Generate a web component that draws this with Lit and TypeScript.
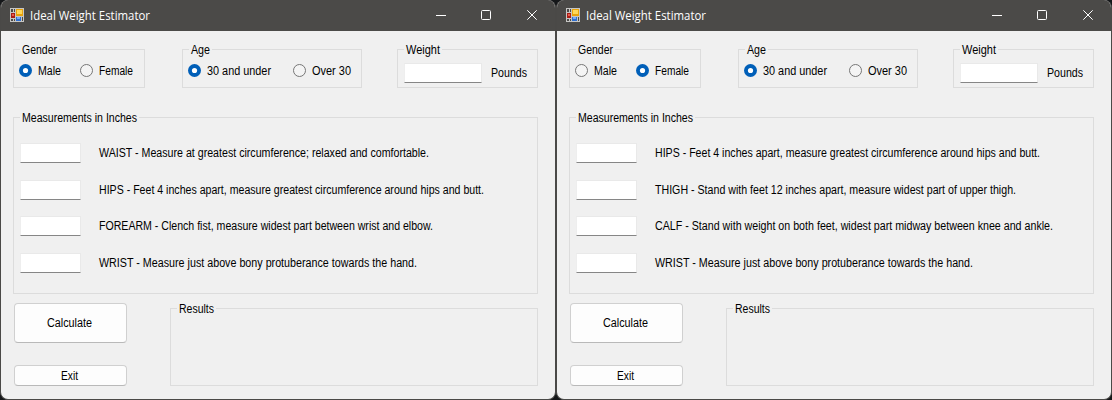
import { LitElement, html, css } from "lit";
import { customElement, property } from "lit/decorators.js";

/** A single line of text set to an exact advance width. */
@customElement("fit-text")
class FitText extends LitElement {
  @property() text = "";
  @property({ type: Number }) w = 10;
  @property({ type: Number }) size = 12;
  static styles = css`
    :host { display: block; flex: none; height: 14px; }
    svg { display: block; overflow: visible; }
    text { font-family: var(--face, "Liberation Sans", Arial, sans-serif); fill: currentColor; }
  `;
  render() {
    return html`<svg width=${this.w} height="14">
      <text x="0" y="11" font-size=${this.size} textLength=${this.w} lengthAdjust="spacingAndGlyphs">${this.text}</text>
    </svg>`;
  }
}

@customElement("group-box")
class GroupBox extends LitElement {
  @property() label = "";
  @property({ type: Number }) w = 10;
  static styles = css`
    :host { display: block; box-sizing: border-box; border: 1px solid #dcdcdc; }
    .legend { width: fit-content; margin: -7px 0 0 6px; padding: 0 2px; background: #f0f0f0; }
  `;
  render() {
    return html`<div class="legend"><fit-text .text=${this.label} .w=${this.w}></fit-text></div><slot></slot>`;
  }
}

@customElement("radio-option")
class RadioOption extends LitElement {
  @property() label = "";
  @property({ type: Number }) w = 10;
  @property({ type: Boolean }) checked = false;
  static styles = css`
    :host { display: flex; height: 14px; gap: 6px; }
    svg { display: block; flex: none; }
  `;
  render() {
    return html`<svg width="13" height="13" viewBox="0 0 13 13">
        ${this.checked
          ? html`<svg width="13" height="13"><circle cx="6.5" cy="6.5" r="6.5" fill="#005fb8" /><circle cx="6.5" cy="6.5" r="2.6" fill="#fff" /></svg>`
          : html`<svg width="13" height="13"><circle cx="6.5" cy="6.5" r="6" fill="#f4f4f4" stroke="#767676" /></svg>`}
      </svg>
      <fit-text .text=${this.label} .w=${this.w}></fit-text>`;
  }
}

interface Line { text: string; w: number; }

@customElement("estimator-window")
class EstimatorWindow extends LitElement {
  @property() gender = "Male";
  @property({ attribute: false }) lines: Line[] = [];
  static styles = css`
    :host { display: block; box-sizing: border-box; width: 556px; height: 400px; border: 1px solid #4a4947; border-top: 0; border-radius: 8px; background: #f0f0f0; overflow: hidden; color: #000; }
    .bar { display: flex; height: 31px; background: #4b4a48; color: #fff; --face: "Open Sans", "Noto Sans", sans-serif; }
    .icon { display: block; margin: 8px 6px 0 9px; }
    .title { margin-top: 9px; }
    .controls { display: block; margin-left: auto; margin-right: 17px; margin-top: 9px; }
    .content { padding: 18px 17px 0 12px; }
    .top { display: flex; }
    .gender { width: 132px; height: 39px; }
    .age { width: 180px; height: 39px; margin-left: 37px; }
    .weight { width: 141px; height: 39px; margin-left: 35px; }
    .radios { display: flex; margin: 7px 0 0 5px; }
    .gender .second { margin-left: 19px; }
    .age .second { margin-left: 22px; }
    .field { flex: none; box-sizing: border-box; width: 61px; height: 20px; background: #fff; border: 1px solid #e9e9e9; border-left-color: #eeeeee; border-bottom-color: #868686; }
    .amount { display: flex; align-items: center; gap: 9px; margin: 6px 0 0 6px; }
    .amount .field { width: 78px; }
    .measure { height: 177px; margin-top: 29px; }
    .rows { display: grid; grid-template-rows: 37px 36px 37px 20px; margin: 18px 0 0 6px; }
    .row { display: flex; align-items: center; height: 20px; gap: 18px; }
    .bottom { display: flex; margin-top: 9px; }
    .actions { display: flex; flex-direction: column; gap: 22px; margin-left: 1px; }
    button { display: flex; align-items: center; justify-content: center; box-sizing: border-box; width: 113px; height: 40px; padding: 0 2px 0 0; border: 1px solid #d0d0d0; border-bottom-color: #b9b9b9; border-radius: 4px; background: #fdfdfd; color: #000; }
    button.exit { height: 21px; }
    .results { width: 368px; height: 78px; margin: 5px 0 0 43px; }
  `;
  render() {
    return html`
      <div class="bar">
        <svg class="icon" width="14" height="14" viewBox="0 0 14 14" shape-rendering="crispEdges">
          <rect width="14" height="14" fill="#c6c6c4" />
          <path d="M1 1h4v3H1zM1 11h4v2H1zM12 9h1v4h-1z" fill="#4b4a48" />
          <path d="M3 1h1v3H3zM3 11h1v2H3z" fill="#c6c6c4" />
          <path d="M1 5h4v5H1z" fill="#a91d16" /><path d="M2 6h2v2H2z" fill="#e85b4d" />
          <path d="M6 1h7v7H6z" fill="#e8a30c" /><path d="M7 2h5v4H7z" fill="#ffd85a" />
          <path d="M6 9h5v4H6z" fill="#2f6fd0" /><path d="M7 9h3v2H7z" fill="#78aaf5" />
        </svg>
        <fit-text class="title" .text=${"Ideal Weight Estimator"} .w=${120} .size=${12}></fit-text>
        <svg class="controls" width="102" height="12" viewBox="0 0 102 12" fill="none" stroke="#fff">
          <path d="M0 6.5h10" />
          <rect x="45.5" y="1.5" width="9" height="9" rx="1" />
          <path d="M91.3 1.3l9.4 9.4M100.7 1.3l-9.4 9.4" />
        </svg>
      </div>
      <div class="content">
        <div class="top">
          <group-box class="gender" label="Gender" w="35">
            <div class="radios">
              <radio-option label="Male" w="23" ?checked=${this.gender === "Male"}></radio-option>
              <radio-option class="second" label="Female" w="34" ?checked=${this.gender === "Female"}></radio-option>
            </div>
          </group-box>
          <group-box class="age" label="Age" w="19">
            <div class="radios">
              <radio-option label="30 and under" w="64" checked></radio-option>
              <radio-option class="second" label="Over 30" w="39"></radio-option>
            </div>
          </group-box>
          <group-box class="weight" label="Weight" w="34">
            <div class="amount"><div class="field"></div><fit-text text="Pounds" w="36"></fit-text></div>
          </group-box>
        </div>
        <group-box class="measure" label="Measurements in Inches" w="115">
          <div class="rows">
            ${this.lines.map((l) => html`<div class="row"><div class="field"></div><fit-text .text=${l.text} .w=${l.w}></fit-text></div>`)}
          </div>
        </group-box>
        <div class="bottom">
          <div class="actions">
            <button><fit-text text="Calculate" w="45"></fit-text></button>
            <button class="exit"><fit-text text="Exit" w="17"></fit-text></button>
          </div>
          <group-box class="results" label="Results" w="35"></group-box>
        </div>
      </div>
    `;
  }
}

const HIPS: Line = { text: "HIPS - Feet 4 inches apart, measure greatest circumference around hips and butt.", w: 385 };
const WRIST: Line = { text: "WRIST - Measure just above bony protuberance towards the hand.", w: 318 };
const MALE: Line[] = [
  { text: "WAIST - Measure at greatest circumference; relaxed and comfortable.", w: 330 },
  HIPS,
  { text: "FOREARM - Clench fist, measure widest part between wrist and elbow.", w: 334 },
  WRIST,
];
const FEMALE: Line[] = [
  HIPS,
  { text: "THIGH - Stand with feet 12 inches apart, measure widest part of upper thigh.", w: 361 },
  { text: "CALF - Stand with weight on both feet, widest part midway between knee and ankle.", w: 398 },
  WRIST,
];

@customElement("app-root")
class AppRoot extends LitElement {
  static styles = css`
    :host { display: flex; width: 1112px; height: 400px; background: #151719; overflow: hidden; }
  `;
  render() {
    return html`<estimator-window gender="Male" .lines=${MALE}></estimator-window>
      <estimator-window gender="Female" .lines=${FEMALE}></estimator-window>`;
  }
}
